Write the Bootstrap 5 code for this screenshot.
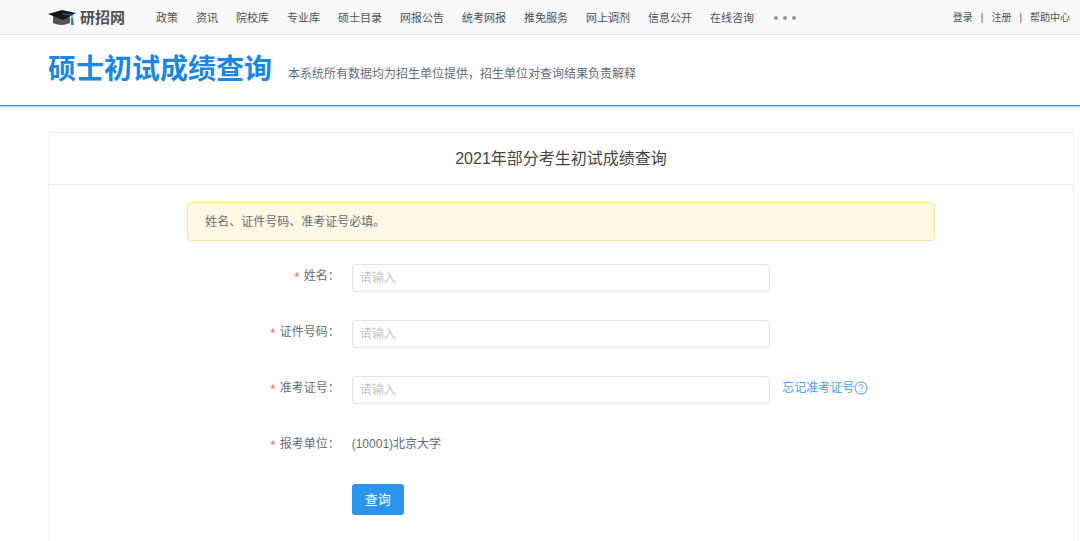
<!DOCTYPE html>
<html lang="zh-CN">
<head>
<meta charset="utf-8">
<meta name="viewport" content="width=device-width, initial-scale=1">
<title>硕士初试成绩查询</title>
<link href="https://cdn.jsdelivr.net/npm/bootstrap@5.3.0/dist/css/bootstrap.min.css" rel="stylesheet">
<style>
body{font-family:"Liberation Sans","Noto Sans CJK SC",sans-serif;font-size:12px;line-height:24px;color:#666c77;background:#fff}
a{text-decoration:none}
.topbar{height:35px;padding:1px 10px 0 48px;background:#f7f9fb;border-bottom:1px solid #dfe2e2;font-size:11px}
.topbar a{color:#505050}
.topbar .brand-link{width:108px;font-size:15px;font-weight:700;gap:4px}
.main-links{gap:18px}
.more-btn{gap:5px;margin-left:2px}
.more-btn i{width:4px;height:4px;border-radius:50%;background:#999}
.user-links{gap:8px;font-size:10px;color:#555}
.page-head{height:71px;padding-left:48px;gap:16px;border-bottom:1px solid #2c8fe3;box-shadow:0 1px #b4d8f6}
.page-head h1{font-size:28px;font-weight:700;color:#1a87e0}
.panel{margin:26px 6px 0 48px;border:1px solid #f0f0f0;border-bottom:0;min-height:calc(100vh - 132px)}
.panel h2{height:52px;font-size:16px;font-weight:400;color:#444;border-bottom:1px solid #ebebeb}
.query-box{width:73%;padding-top:17px}
.notice{padding:7px 17px 6px;background:#fff8e4;border:1px solid #ffe3a3;border-radius:4px;margin-bottom:23px}
.field{display:grid;grid-template-columns:22fr 56fr 22fr;min-height:28px;margin-bottom:28px;align-items:start}
.field .caption{text-align:right;padding-right:12px}
.required::before{content:"*";color:#f56c6c;font-size:14px;margin-right:4px;vertical-align:-2px;line-height:12px}
.field .form-control{height:28px;padding:0 7px;font-size:12px;line-height:24px;border-color:#e4e5e8;border-radius:4px}
.field .form-control::placeholder{color:#c3c6cc}
.help-link{padding-left:12px;color:#4a9fec}
.query-btn{justify-self:start;height:31px;padding:0 13px;font-size:13px;background:#2b94ec;color:#fff;border:0;border-radius:3px}
</style>
</head>
<body>
<header class="topbar d-flex align-items-center">
  <a href="#" class="brand-link d-flex align-items-center">
    <svg width="28" height="16" viewBox="0 0 28 16" aria-hidden="true"><path d="M5 6v7q8 4 17 0V6z" fill="#555"/><path d="M0 4L14 0l14 3-13 7z" fill="#161616"/><path d="M14 4l10 1v5" fill="none" stroke="#2676c8"/><path d="M23 8h2l1 7h-3z" fill="#1c7fe0"/></svg>
    <span>研招网</span>
  </a>
  <nav class="main-links d-flex align-items-center text-nowrap">
    <a href="#">政策</a><a href="#">资讯</a><a href="#">院校库</a><a href="#">专业库</a><a href="#">硕士目录</a><a href="#">网报公告</a><a href="#">统考网报</a><a href="#">推免服务</a><a href="#">网上调剂</a><a href="#">信息公开</a><a href="#">在线咨询</a>
    <button type="button" class="more-btn d-flex bg-transparent border-0 p-0" aria-label="更多"><i></i><i></i><i></i></button>
  </nav>
  <div class="user-links d-flex ms-auto text-nowrap"><a href="#">登录</a><span>|</span><a href="#">注册</a><span>|</span><a href="#">帮助中心</a></div>
</header>
<div class="page-head d-flex align-items-center">
  <h1 class="m-0">硕士初试成绩查询</h1>
  <span class="pt-2">本系统所有数据均为招生单位提供，招生单位对查询结果负责解释</span>
</div>
<main class="panel">
  <h2 class="d-flex align-items-center justify-content-center m-0">2021年部分考生初试成绩查询</h2>
  <form class="query-box mx-auto">
    <div class="notice">姓名、证件号码、准考证号必填。</div>
    <div class="field"><label class="caption required" for="xm">姓名：</label><input class="form-control" id="xm" type="text" placeholder="请输入"></div>
    <div class="field"><label class="caption required" for="zjhm">证件号码：</label><input class="form-control" id="zjhm" type="text" placeholder="请输入"></div>
    <div class="field"><label class="caption required" for="zkzh">准考证号：</label><input class="form-control" id="zkzh" type="text" placeholder="请输入">
      <a href="#" class="help-link d-flex align-items-center">忘记准考证号<svg width="14" height="14" viewBox="0 0 14 14" fill="none" stroke="currentColor" aria-hidden="true"><circle cx="7" cy="7" r="6"/><path d="M5 5.6C5 3 9 3 9 5.4 9 7 7 6.900 7 8.500M7 9.600v1.200"/></svg></a></div>
    <div class="field mb-4"><span class="caption required">报考单位：</span><span>(10001)北京大学</span></div>
    <div class="field"><span></span><button type="button" class="btn query-btn">查询</button></div>
  </form>
</main>
<script src="https://cdn.jsdelivr.net/npm/bootstrap@5.3.0/dist/js/bootstrap.bundle.min.js"></script>
</body>
</html>
